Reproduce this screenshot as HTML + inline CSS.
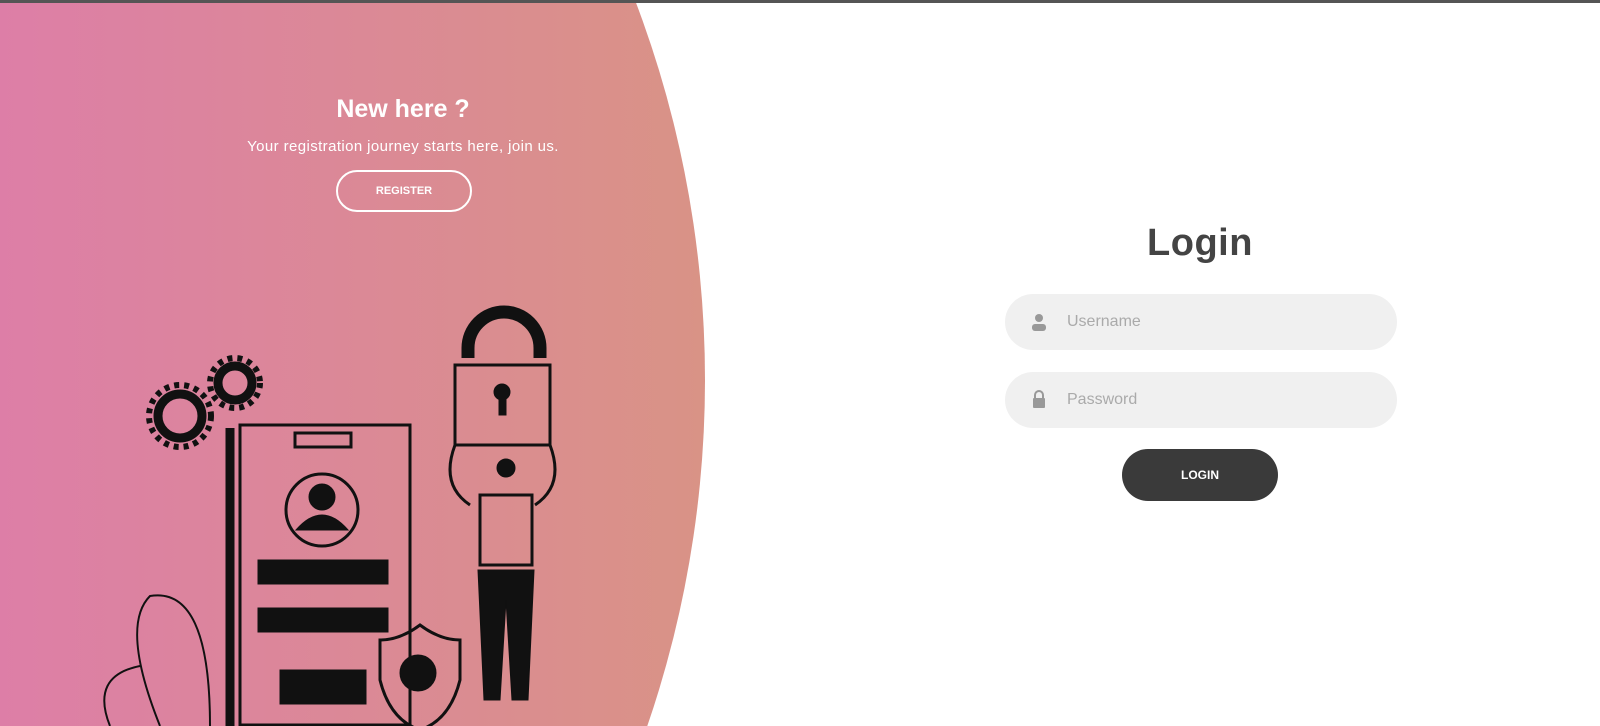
<!DOCTYPE html>
<html style="overflow:hidden"><head><meta charset="utf-8"><style>
html,body{margin:0;width:1600px;height:726px;overflow:hidden}
body{background:#fff;font-family:"Liberation Sans",sans-serif}
.wrap{position:relative;width:1600px;height:726px;overflow:hidden}
.bg{position:absolute;left:-1427px;top:-686px;width:2132px;height:2132px;border-radius:50%;background:linear-gradient(90deg,#de7aae 60%,#d99386 100%)}
.top{position:absolute;left:0;top:0;width:1600px;height:3px;background:#555}
.t{position:absolute;color:#fff;text-align:center;width:500px;left:153px}
.field{position:absolute;left:1005px;width:392px;height:56px;border-radius:28px;background:#f0f0f0;color:#aaa;font-size:16px;line-height:56px}
.field span{position:absolute;left:62px}
</style></head><body><div class="wrap">
<div class="bg"></div><div class="top"></div>
<div class="t" style="top:95px;font-size:25px;font-weight:bold">New here ?</div>
<div class="t" style="top:138px;font-size:15px;letter-spacing:0.4px">Your registration journey starts here, join us.</div>
<div style="position:absolute;left:336px;top:170px;width:136px;height:42px;border:2px solid #fff;border-radius:22px;box-sizing:border-box;color:#fff;font-size:11px;font-weight:bold;text-align:center;line-height:38px">REGISTER</div>
<div style="position:absolute;left:1000px;top:222px;width:400px;text-align:center;font-size:38px;font-weight:bold;color:#444;letter-spacing:0.5px">Login</div>
<div class="field" style="top:294px"><svg style="position:absolute;left:26px;top:19px" width="16" height="18"><circle cx="8" cy="5" r="4" fill="#999"/><rect x="1" y="11" width="14" height="7" rx="3" fill="#999"/></svg><span>Username</span></div>
<div class="field" style="top:372px"><svg style="position:absolute;left:26px;top:18px" width="16" height="18"><path d="M4 8V5a4 4 0 0 1 8 0v3" stroke="#999" stroke-width="2" fill="none"/><rect x="2" y="8" width="12" height="10" rx="1" fill="#999"/></svg><span>Password</span></div>
<div style="position:absolute;left:1122px;top:449px;width:156px;height:52px;border-radius:26px;background:#3a3a3a;color:#fff;font-size:12px;font-weight:bold;text-align:center;line-height:52px">LOGIN</div>
<svg style="position:absolute;left:0;top:0" width="720" height="726" fill="none" stroke="#111">
<g stroke-width="9"><circle cx="180" cy="416" r="22"/><circle cx="235" cy="383" r="17"/></g>
<g stroke-width="6" stroke-dasharray="5 5"><circle cx="180" cy="416" r="31"/><circle cx="235" cy="383" r="25"/></g>
<line x1="230" y1="428" x2="230" y2="726" stroke-width="9"/>
<rect x="240" y="425" width="170" height="300" stroke-width="3"/>
<rect x="295" y="433" width="56" height="14" stroke-width="3"/>
<circle cx="322" cy="510" r="36" stroke-width="3"/>
<circle cx="322" cy="497" r="13" fill="#111"/><path d="M296 530q26-30 52 0z" fill="#111"/>
<rect x="258" y="560" width="130" height="24" fill="#111"/>
<rect x="258" y="608" width="130" height="24" fill="#111"/>
<rect x="280" y="670" width="86" height="34" fill="#111"/>
<path d="M420 625q-20 15-40 15v40q10 40 40 50q30-10 40-50v-40q-20 0-40-15z" stroke-width="3"/>
<circle cx="418" cy="673" r="18" fill="#111"/>
<path d="M468 358v-10a36 36 0 0 1 72 0v10" stroke-width="13"/>
<rect x="455" y="365" width="95" height="80" stroke-width="3"/>
<circle cx="502" cy="392" r="8" fill="#111"/><rect x="499" y="395" width="7" height="20" fill="#111"/>
<path d="M455 445q-15 40 15 60M550 445q15 40-15 60" stroke-width="3"/>
<circle cx="506" cy="468" r="9" fill="#111"/>
<path d="M480 495h52v70h-52z" stroke-width="3"/>
<path d="M478 570h56l-6 130h-16l-6-100l-6 100h-16z" fill="#111"/>
<path d="M160 726q-40-100-10-130q60-10 60 130M110 726q-20-50 30-60" stroke-width="2"/>
</svg>
</div></body></html>
